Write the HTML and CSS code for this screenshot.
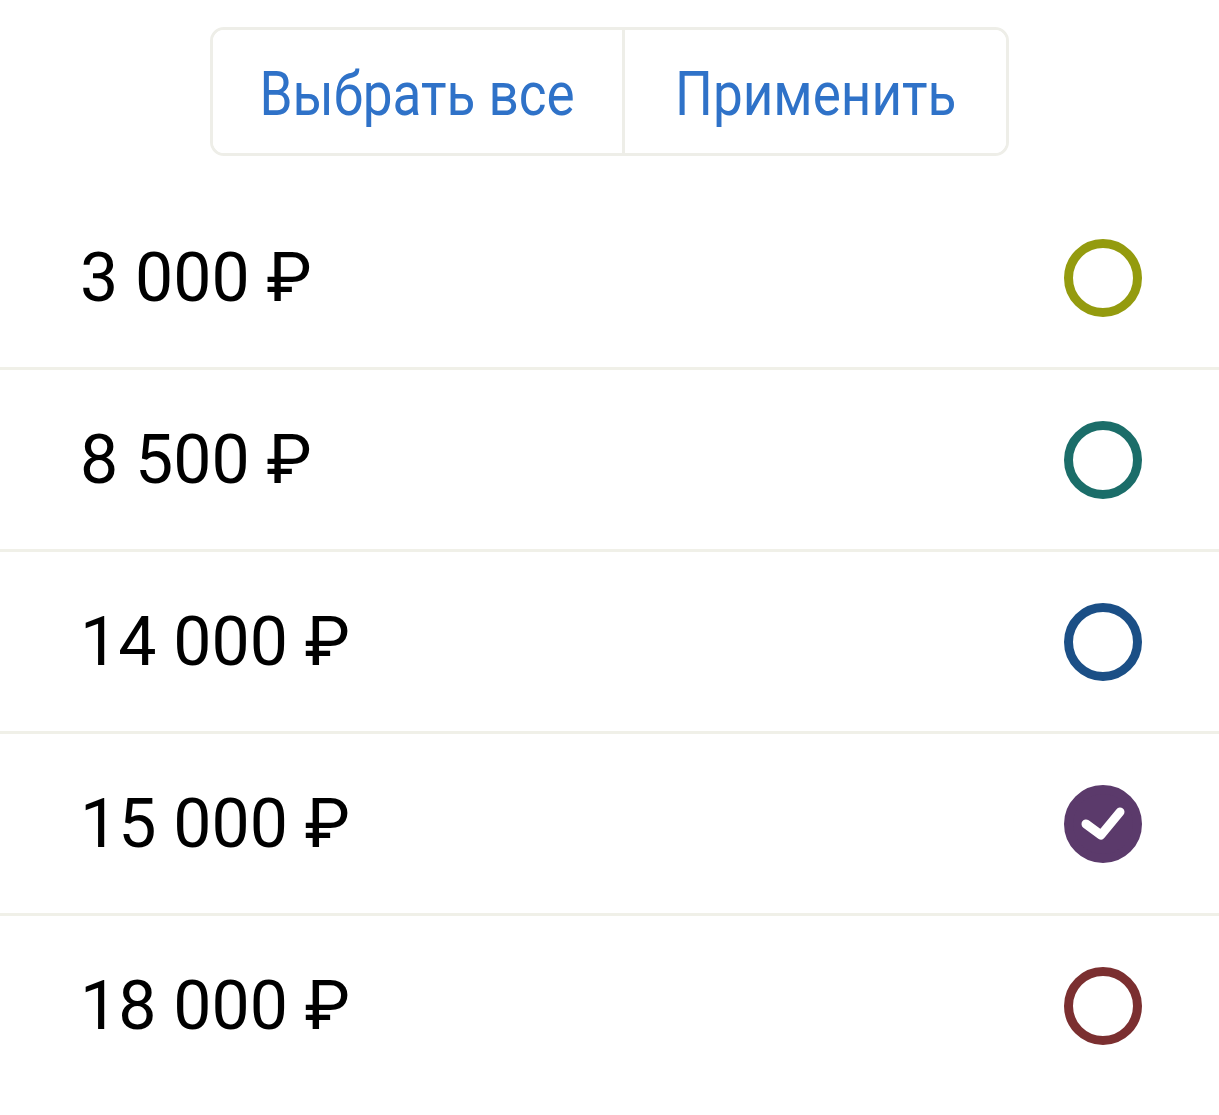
FILE: index.html
```html
<!DOCTYPE html>
<html lang="ru">
<head>
    <meta charset="UTF-8">
    <meta name="viewport" content="width=device-width, initial-scale=1.0">
    <title>Фильтр суммы</title>
    <link rel="stylesheet" href="styles.css">
</head>
<body>
    <div class="actions">
        <button class="action" type="button"><span>Выбрать все</span></button>
        <button class="action" type="button"><span>Применить</span></button>
    </div>
    <ul class="options">
        <li class="option">
            <span class="price">3 000 ₽</span>
            <span class="mark olive"></span>
        </li>
        <li class="option">
            <span class="price">8 500 ₽</span>
            <span class="mark teal"></span>
        </li>
        <li class="option">
            <span class="price">14 000 ₽</span>
            <span class="mark navy"></span>
        </li>
        <li class="option">
            <span class="price">15 000 ₽</span>
            <span class="mark purple checked">
                <svg viewBox="0 0 78 78" width="78" height="78">
                    <path d="M22 39 L37 50 L56 27" fill="none" stroke="#fff" stroke-width="9" stroke-linecap="round" stroke-linejoin="round"/>
                </svg>
            </span>
        </li>
        <li class="option">
            <span class="price">18 000 ₽</span>
            <span class="mark maroon"></span>
        </li>
    </ul>
</body>
</html>
```

FILE: styles.css
```css
body {
    margin: 0;
    background: #fff;
    font-family: Roboto, "Noto Sans", sans-serif;
    color: #000;
}

.actions {
    display: flex;
    width: 799px;
    height: 129px;
    margin: 27px auto 0;
    border: 3px solid #eeeee8;
    border-radius: 14px;
    box-sizing: border-box;
    overflow: hidden;
}

.action {
    flex: 1;
    border: none;
    background: #fff;
    color: #2f72c8;
    font-family: inherit;
    font-size: 61px;
    padding: 0;
    cursor: pointer;
}

.action span {
    display: inline-block;
    transform: scaleX(0.87);
    margin-top: 4px;
}

.action:first-child {
    flex: 0 0 412px;
    border-right: 3px solid #eeeee8;
}

.options {
    list-style: none;
    margin: 32px 0 0;
    padding: 0;
}

.option {
    display: flex;
    align-items: center;
    justify-content: space-between;
    height: 179px;
    padding: 0 77px 0 80px;
    border-bottom: 3px solid #f0f0e8;
}

.option:last-child {
    border-bottom: none;
}

.price {
    font-size: 68px;
}

.mark {
    width: 78px;
    height: 78px;
    border-radius: 50%;
    border: 9px solid;
    box-sizing: border-box;
}

.mark svg {
    display: block;
    margin: -9px;
}

.olive { border-color: #949b0e; }
.teal { border-color: #1b6d69; }
.navy { border-color: #1b4f86; }
.maroon { border-color: #7b2f30; }

.purple.checked {
    border-color: #5b3a6b;
    background: #5b3a6b;
}
```
